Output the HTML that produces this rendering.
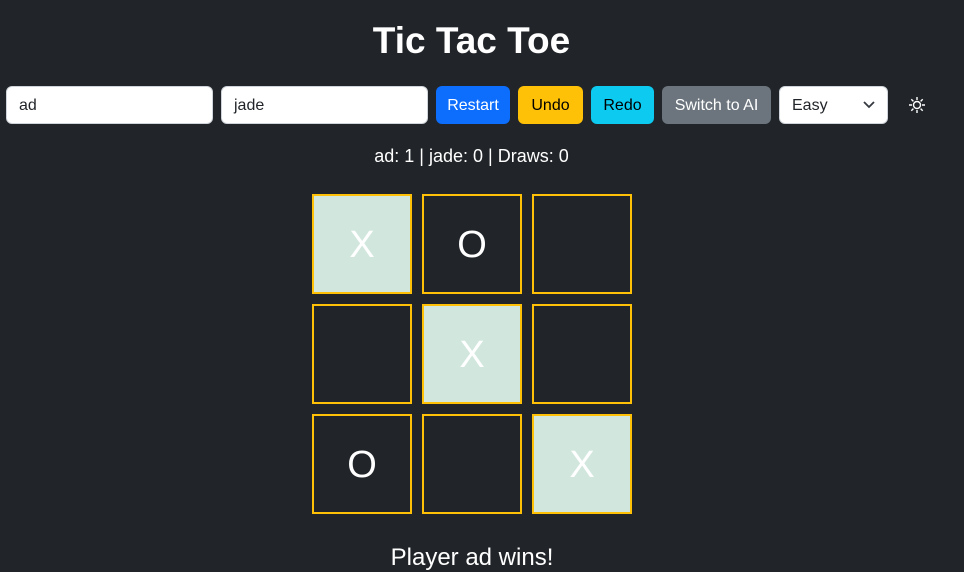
<!DOCTYPE html>
<html><head><style>
body{margin:0;background:#212529;width:964px;height:565px;overflow:hidden;font-family:"Liberation Sans",sans-serif;color:#fff;position:relative}
.a{position:absolute;box-sizing:border-box}
h1{position:absolute;margin:0;left:0;width:943px;text-align:center;top:20px;font-size:37px;font-weight:bold}
.in{background:#fff;border:1px solid #ced4da;border-radius:6px;color:#212529;font-size:16px;padding:0 12px;line-height:38px;top:86px;height:38px}
.b{border-radius:6px;font-size:16px;text-align:center;line-height:40px;top:86px;height:38px}
.c{width:100px;height:100px;border:2px solid #ffc107;text-align:center;line-height:98px;font-size:38px;color:#fff}
.w{background:#d1e7dd}
</style></head><body>
<h1>Tic Tac Toe</h1>
<div class="a in" style="left:6px;width:207px">ad</div>
<div class="a in" style="left:221px;width:207px">jade</div>
<div class="a b" style="left:436px;width:74px;background:#0d6efd;color:#fff">Restart</div>
<div class="a b" style="left:518px;width:65px;background:#ffc107;color:#000">Undo</div>
<div class="a b" style="left:591px;width:63px;background:#0dcaf0;color:#000">Redo</div>
<div class="a b" style="left:662px;width:109px;background:#6c757d;color:#fff">Switch to AI</div>
<div class="a in" style="left:779px;width:109px">Easy
<svg style="position:absolute;right:12px;top:13px" width="12" height="10" viewBox="0 0 12 10"><path d="M1 2l5 5 5-5" fill="none" stroke="#343a40" stroke-width="1.8"/></svg></div>
<svg class="a" style="left:907px;top:95px" width="20" height="20" viewBox="0 0 20 20" fill="none" stroke="#fff" stroke-width="1.4"><circle cx="10" cy="10" r="3.5"/><path d="M10 2v3M10 15v3M2 10h3M15 10h3M4.3 4.3l2.1 2.1M13.6 13.6l2.1 2.1M4.3 15.7l2.1-2.1M13.6 6.4l2.1-2.1"/></svg>
<div class="a" style="left:0;width:943px;text-align:center;top:146px;font-size:18px">ad: 1 | jade: 0 | Draws: 0</div>
<div class="a c w" style="left:312px;top:194px">X</div>
<div class="a c" style="left:422px;top:194px">O</div>
<div class="a c" style="left:532px;top:194px"></div>
<div class="a c" style="left:312px;top:304px"></div>
<div class="a c w" style="left:422px;top:304px">X</div>
<div class="a c" style="left:532px;top:304px"></div>
<div class="a c" style="left:312px;top:414px">O</div>
<div class="a c" style="left:422px;top:414px"></div>
<div class="a c w" style="left:532px;top:414px">X</div>
<div class="a" style="left:0;width:944px;text-align:center;top:544px;font-size:24px">Player ad wins!</div>
</body></html>
